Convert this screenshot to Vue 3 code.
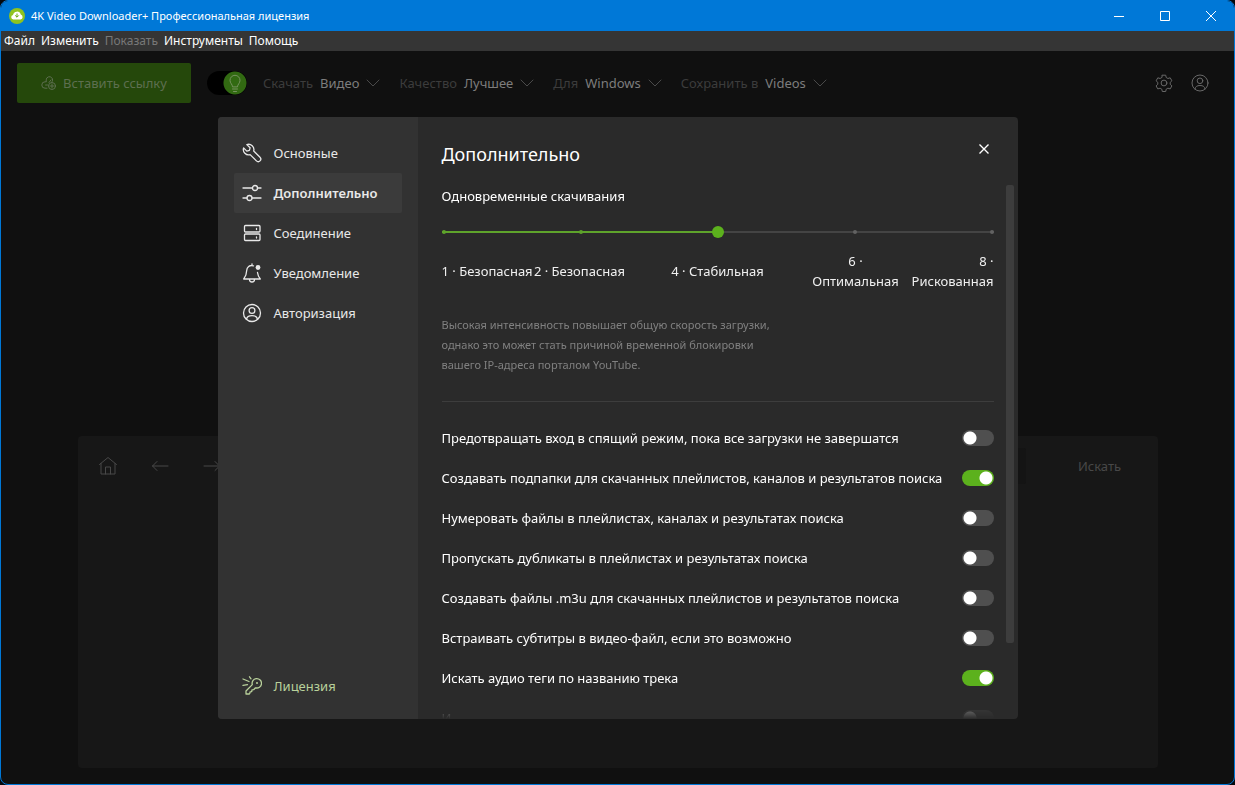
<script setup>
import { ref } from 'vue'

const menus = [
  { text: 'Файл' },
  { text: 'Изменить' },
  { text: 'Показать', disabled: true },
  { text: 'Инструменты' },
  { text: 'Помощь' },
]
const pickers = [
  { label: 'Скачать', value: 'Видео' },
  { label: 'Качество', value: 'Лучшее' },
  { label: 'Для', value: 'Windows' },
  { label: 'Сохранить в', value: 'Videos' },
]
const sections = [
  { id: 'general', text: 'Основные' },
  { id: 'advanced', text: 'Дополнительно' },
  { id: 'connection', text: 'Соединение' },
  { id: 'notification', text: 'Уведомление' },
  { id: 'auth', text: 'Авторизация' },
]
const current = ref('advanced')
const level = ref(2)
const levels = [
  ['1 · Безопасная'],
  ['2 · Безопасная'],
  ['4 · Стабильная'],
  ['6 ·', 'Оптимальная'],
  ['8 ·', 'Рискованная'],
]
const options = ref([
  { text: 'Предотвращать вход в спящий режим, пока все загрузки не завершатся', on: false },
  { text: 'Создавать подпапки для скачанных плейлистов, каналов и результатов поиска', on: true },
  { text: 'Нумеровать файлы в плейлистах, каналах и результатах поиска', on: false },
  { text: 'Пропускать дубликаты в плейлистах и результатах поиска', on: false },
  { text: 'Создавать файлы .m3u для скачанных плейлистов и результатов поиска', on: false },
  { text: 'Встраивать субтитры в видео-файл, если это возможно', on: false },
  { text: 'Искать аудио теги по названию трека', on: true },
  { text: 'И', on: false },
])
</script>

<template>
  <div class="window">
    <header class="titlebar">
      <svg class="logo" viewBox="0 0 16 16">
        <circle cx="8" cy="8" r="8" fill="#8fc31f" />
        <path d="M4.300 11.600a2.400 2.400 0 0 1-.3-4.700 4 4 0 0 1 7.800-.3 2.600 2.600 0 0 1-.2 5z" fill="#fff" />
        <path d="M8 5.500v3.600M6.200 7.400 8 9.200l1.800-1.800" fill="none" stroke="#6aa50f" stroke-width="1" />
      </svg>
      <h1>4K Video Downloader+ Профессиональная лицензия</h1>
      <div class="win-buttons">
        <button aria-label="Свернуть"><svg viewBox="0 0 12 12"><path d="M1 6.500h10" /></svg></button>
        <button aria-label="Развернуть"><svg viewBox="0 0 12 12"><path d="M1.500 1.500h9v9h-9z" /></svg></button>
        <button aria-label="Закрыть окно"><svg viewBox="0 0 12 12"><path d="m1 1 10 10M11 1 1 11" /></svg></button>
      </div>
    </header>

    <nav class="menubar">
      <button v-for="m in menus" :key="m.text" :disabled="m.disabled">{{ m.text }}</button>
    </nav>

    <main class="body">
      <div class="toolbar">
        <button class="paste">
          <svg viewBox="0 0 16 16" class="line">
            <path d="M5 6.800H4a3.200 3.200 0 0 0 0 6.400h2M6.500 10H4.600M5.200 6.500V4.900a3.200 3.200 0 0 1 5.600-2.100c1.200 1.300 1 3.200-.1 4.400M10 4.900 8 7.500" />
            <circle cx="11" cy="11" r="3.500" />
            <path d="M11 9v4M9 11h4" />
          </svg>
          Вставить ссылку
        </button>
        <label class="smart">
          <input type="checkbox" checked aria-label="Умный режим" />
          <svg viewBox="0 0 24 24" class="line">
            <path d="M9.500 15.500c0-2.200-2.500-3.200-2.500-6.200a5 5 0 0 1 10 0c0 3-2.500 4-2.500 6.200zM9.500 18h5M10.500 20.500h3" />
          </svg>
        </label>
        <button v-for="p in pickers" :key="p.label" class="picker">
          <span>{{ p.label }}</span>{{ p.value }}
          <svg viewBox="0 0 14 8" class="line"><path d="m1 1 6 6 6-6" /></svg>
        </button>
        <div class="account">
          <button aria-label="Настройки">
            <svg viewBox="0 0 18 18" class="line">
              <path d="M7.300 1.200h3.400l.5 2.300 1.700 1 2.300-.7 1.700 3-1.700 1.600v1.900l1.700 1.600-1.700 3-2.300-.7-1.700 1-.5 2.300H7.300l-.5-2.300-1.700-1-2.300.7-1.700-3 1.700-1.600V8.400L1.100 6.800l1.700-3 2.300.7 1.700-1z" />
              <circle cx="9" cy="9" r="2.900" />
            </svg>
          </button>
          <button aria-label="Аккаунт">
            <svg viewBox="0 0 18 18" class="line">
              <circle cx="9" cy="9" r="8" /><circle cx="9" cy="6.800" r="2.800" />
              <path d="M4 15c.4-2.500 2-3.500 5-3.500s4.600 1 5 3.500" />
            </svg>
          </button>
        </div>
      </div>

      <section class="browser">
        <div class="browser-bar">
          <button aria-label="Домой">
            <svg viewBox="0 0 20 20" class="line"><path d="m1.500 8.500 8.500-7 8.500 7M3 7.500v10.500h14V7.500M7.500 18v-7h5v7" /></svg>
          </button>
          <button aria-label="Назад">
            <svg viewBox="0 0 20 20" class="line"><path d="M18 10H2.500M7 5.500 2.500 10 7 14.500" /></svg>
          </button>
          <button aria-label="Вперёд">
            <svg viewBox="0 0 20 20" class="line"><path d="M2 10h15.500M13 5.500l4.500 4.500-4.500 4.500" /></svg>
          </button>
          <input type="text" aria-label="Адрес" />
          <button class="search">Искать</button>
        </div>
      </section>

      <div class="overlay">
        <div class="dialog" role="dialog" aria-labelledby="dialog-title">
          <nav class="side">
            <button
              v-for="s in sections"
              :key="s.id"
              :class="{ active: s.id === current }"
              @click="current = s.id"
            >
              <svg viewBox="0 0 20 20" class="line">
                <path
                  v-if="s.id === 'general'"
                  d="M4.800 1.600A5.300 5.300 0 0 1 11.700 8l6.300 6.300a2.500 2.500 0 0 1-3.600 3.600L8.100 11.600A5.300 5.300 0 0 1 1.600 4.900l3.200 3.200 2.600-.7.700-2.600z"
                />
                <template v-else-if="s.id === 'advanced'">
                  <path d="M1 5h9.500M15.500 5H19M1 15h4M10 15h9" />
                  <circle cx="13" cy="5" r="2.500" /><circle cx="7.500" cy="15" r="2.500" />
                </template>
                <template v-else-if="s.id === 'connection'">
                  <rect x="2.500" y="2.500" width="15.500" height="6.500" rx="1" />
                  <rect x="2.500" y="11" width="15.500" height="6.500" rx="1" />
                  <path d="M14.500 5.500v1M14.500 14v1" />
                </template>
                <template v-else-if="s.id === 'notification'">
                  <path d="M11.500 2.800C7.500 1.600 4.800 4.200 4.700 7.500c-.1 4-1 6-3 8.500h16.600c-1.500-1.800-2.500-3.600-2.800-6.500M10 .8v1.500M7.500 16.500a2.500 2.500 0 0 0 5 0" />
                  <circle cx="16" cy="4.500" r="2.400" class="dot" />
                </template>
                <template v-else>
                  <circle cx="10" cy="10" r="8.500" /><circle cx="10" cy="7.500" r="2.900" />
                  <path d="M4.500 16.300c.4-2.600 2.200-3.600 5.500-3.600s5.100 1 5.500 3.600" />
                </template>
              </svg>
              {{ s.text }}
            </button>
            <button class="license">
              <svg viewBox="0 0 20 20" class="line">
                <path d="M10.300 8.600a4.700 4.700 0 1 1 3.200 3.200l-1.900 1.900-1.600.2-.3 1.700-1.600.3-.3 1.500-.6.600H4v-3z" />
                <circle cx="15" cy="7" r="1" class="dot" />
                <path d="M1 3 7 5.500M1 9.300l4.500-.6M7.500.8l1.500 2" />
              </svg>
              Лицензия
            </button>
          </nav>

          <div class="pane">
            <div class="pane-head">
              <h2 id="dialog-title">Дополнительно</h2>
              <button class="close" aria-label="Закрыть">
                <svg viewBox="0 0 12 12"><path d="m1.500 1.500 9 9M10.500 1.500l-9 9" /></svg>
              </button>
            </div>
            <div class="scroll">
              <div class="content">
                <label class="caption" for="level">Одновременные скачивания</label>
                <div class="slider">
                  <div class="rail"><div class="fill" :style="{ width: level * 25 + '%' }"></div></div>
                  <div class="ticks">
                    <i v-for="(l, i) in levels" :key="i" :class="{ on: i <= level }"></i>
                  </div>
                  <input id="level" v-model.number="level" type="range" min="0" max="4" step="1" />
                </div>
                <div class="levels">
                  <div v-for="(l, i) in levels" :key="i"><span v-for="t in l" :key="t">{{ t }}</span></div>
                </div>
                <p class="hint">
                  Высокая интенсивность повышает общую скорость загрузки,<br />
                  однако это может стать причиной временной блокировки<br />
                  вашего IP-адреса порталом YouTube.
                </p>
                <hr />
                <label v-for="o in options" :key="o.text" class="option">
                  {{ o.text }}
                  <input v-model="o.on" type="checkbox" class="toggle" />
                </label>
              </div>
              <div class="scrollbar"><div></div></div>
            </div>
          </div>
        </div>
      </div>
    </main>
  </div>
</template>

<style>
body {
  margin: 0;
  background: #05080c;
}
</style>

<style scoped>
* {
  box-sizing: border-box;
}
.window {
  display: flex;
  flex-direction: column;
  height: 100vh;
  overflow: hidden;
  border: 1px solid #0078d7;
  border-radius: 8px;
  background: #101010;
  color: #fff;
  font: 13px/20px 'Noto Sans', sans-serif;
}
button,
input {
  margin: 0;
  padding: 0;
  border: 0;
  background: none;
  color: inherit;
  font: inherit;
}
button {
  display: flex;
  align-items: center;
  white-space: nowrap;
}
svg {
  display: block;
  flex: none;
  fill: none;
  stroke: currentColor;
}
.line {
  stroke-linecap: round;
  stroke-linejoin: round;
}
.titlebar {
  display: flex;
  align-items: center;
  flex: none;
  height: 30px;
  padding-left: 8px;
  background: #0078d7;
}
.logo {
  width: 16px;
  height: 16px;
  margin-right: 6px;
  stroke: none;
}
h1 {
  margin: 0;
  font-size: 11px;
  font-weight: 400;
}
.win-buttons {
  display: flex;
  margin-left: auto;
}
.win-buttons button {
  justify-content: center;
  width: 46px;
  height: 28px;
}
.win-buttons svg {
  width: 12px;
  height: 12px;
}
.menubar {
  display: flex;
  flex: none;
  gap: 6px;
  height: 20px;
  padding-left: 3px;
  background: #353535;
  font-size: 12px;
}
.menubar button:disabled {
  color: #787878;
}
.body {
  position: relative;
  display: flex;
  flex: 1;
  flex-direction: column;
  min-height: 0;
}
.toolbar {
  display: flex;
  align-items: center;
  height: 64px;
  padding: 0 25px 0 16px;
  color: #7d7d7d;
}
.paste {
  justify-content: center;
  gap: 6px;
  width: 174px;
  height: 40px;
  border-radius: 2px;
  background: #25480b;
  color: #5d6f50;
}
.paste svg {
  width: 16px;
  height: 16px;
}
.smart {
  display: grid;
  width: 40px;
  margin: 0 16px;
  align-items: center;
}
.smart > * {
  grid-area: 1 / 1;
}
.smart input {
  appearance: none;
  width: 40px;
  height: 24px;
  border-radius: 12px;
  background: radial-gradient(circle at 28px 12px, #326a12 11px, #000 12px);
}
.smart svg {
  justify-self: end;
  width: 24px;
  height: 24px;
  color: #76925f;
}
.picker {
  gap: 7px;
  margin-right: 19px;
}
.picker span {
  color: #3c3c3c;
}
.picker svg {
  width: 14px;
  height: 8px;
  color: #4a4a4a;
}
.account {
  display: flex;
  gap: 18px;
  margin-left: auto;
  color: #686868;
}
.account svg {
  width: 18px;
  height: 18px;
}
.browser {
  flex: 1;
  width: calc(100% - 144px);
  max-width: 1080px;
  margin: 321px auto 16px;
  border-radius: 4px;
  background: #171717;
}
.browser-bar {
  display: flex;
  align-items: center;
  gap: 32px;
  height: 60px;
  padding-left: 20px;
  color: #484848;
}
.browser-bar svg {
  width: 20px;
  height: 20px;
}
.browser-bar input {
  flex: 1;
  min-width: 0;
  height: 36px;
  border-radius: 2px;
  background: #141414;
}
.browser-bar .search {
  justify-content: center;
  width: 116px;
  margin-left: -16px;
}
.overlay {
  position: absolute;
  inset: 0;
  display: flex;
  align-items: center;
  justify-content: center;
}
.dialog {
  display: flex;
  width: 800px;
  max-width: 100%;
  height: 602px;
  max-height: 100%;
  overflow: hidden;
  border-radius: 4px;
  background: #2a2a2a;
}
.side {
  display: flex;
  flex: none;
  flex-direction: column;
  width: 200px;
  padding: 16px 16px 13px;
  background: #323232;
  color: #e8e8e8;
}
.side button {
  gap: 12px;
  height: 40px;
  padding-left: 8px;
  border-radius: 2px;
}
.side button.active {
  background: #3b3b3b;
  font-weight: 600;
}
.side svg {
  width: 20px;
  height: 20px;
  stroke-width: 1.3;
}
.dot {
  fill: currentColor;
  stroke: none;
}
.side .license {
  margin-top: auto;
  color: #b9d19b;
}
.pane {
  display: flex;
  flex: 1;
  flex-direction: column;
  min-width: 0;
  padding-left: 24px;
}
.pane-head {
  display: flex;
  align-items: flex-start;
  justify-content: space-between;
  height: 68px;
  padding: 24px 28px 0 0;
}
h2 {
  margin: 0;
  font-size: 18px;
  font-weight: 400;
  line-height: 26px;
}
.close {
  justify-content: center;
  height: 16px;
}
.close svg {
  width: 12px;
  height: 12px;
  stroke-width: 1.4;
}
.scroll {
  display: flex;
  flex: 1;
  gap: 12px;
  min-height: 0;
  padding-right: 4px;
  overflow: hidden;
}
.content {
  flex: 1;
  min-width: 0;
  overflow: hidden;
  mask-image: linear-gradient(to top, transparent, rgba(0, 0, 0, 0.25) 8px, #000 24px);
}
.caption {
  display: block;
  line-height: 22px;
}
.slider {
  display: grid;
  align-items: center;
  height: 20px;
  margin-top: 15px;
}
.slider > * {
  grid-area: 1 / 1;
}
.rail {
  height: 2px;
  background: #444;
}
.fill {
  height: 2px;
  background: #5ea32b;
}
.ticks {
  display: flex;
  justify-content: space-between;
}
.ticks i {
  width: 4px;
  height: 4px;
  border-radius: 2px;
  background: #626262;
}
.ticks .on {
  background: #5ea32b;
}
.slider input {
  appearance: none;
  width: 100%;
  height: 20px;
}
.slider input::-webkit-slider-thumb {
  appearance: none;
  width: 12px;
  height: 12px;
  border-radius: 50%;
  background: #5cb11d;
}
.levels {
  display: grid;
  grid-template-columns: minmax(0, 1fr) repeat(3, minmax(0, 2fr)) minmax(0, 1fr);
  align-items: center;
  justify-items: center;
  height: 40px;
  margin-top: 9px;
  color: #f0f0f0;
  white-space: nowrap;
}
.levels div {
  text-align: center;
}
.levels div:first-child {
  justify-self: start;
}
.levels div:last-child {
  justify-self: end;
  text-align: right;
}
.levels span {
  display: block;
}
.hint {
  margin: 24px 0 26px;
  color: #808080;
  font-size: 11px;
}
hr {
  height: 1px;
  margin: 0 0 16px;
  border: 0;
  background: #3d3d3d;
}
.option {
  display: flex;
  align-items: center;
  justify-content: space-between;
  height: 40px;
  white-space: nowrap;
}
.toggle {
  appearance: none;
  flex: none;
  width: 32px;
  height: 16px;
  border-radius: 8px;
  background: radial-gradient(circle at 8px 8px, #fff 6px, #4f4f4f 7px);
}
.toggle:checked {
  background: radial-gradient(circle at 24px 8px, #fff 6px, #5cb11d 7px);
}
.scrollbar {
  width: 8px;
}
.scrollbar div {
  height: 458px;
  border-radius: 2px;
  background: #3d3d3d;
}
</style>
